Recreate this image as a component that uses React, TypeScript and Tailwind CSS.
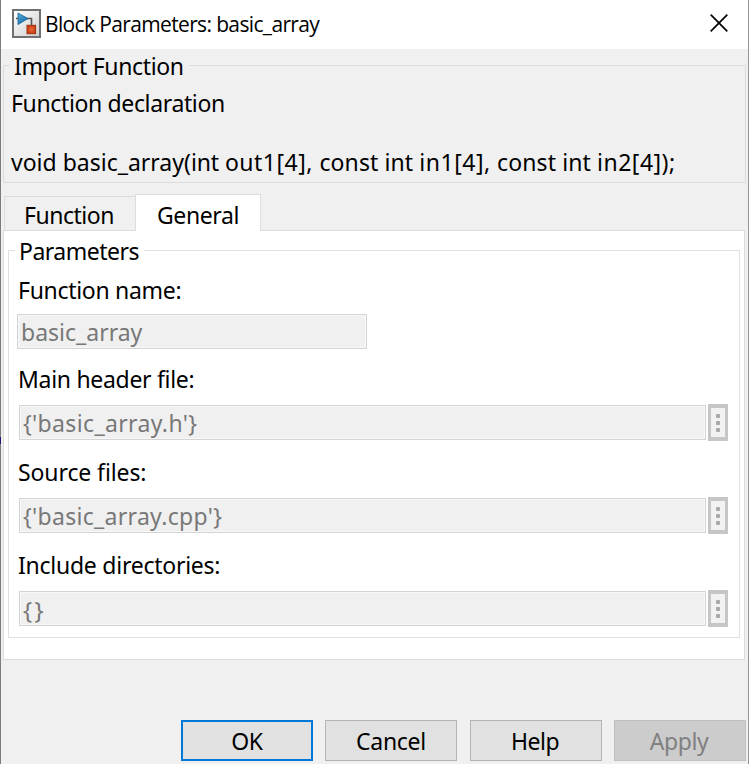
import React from 'react';

const FONT = "font-['Noto_Sans',sans-serif]";

function BlockIcon() {
  return (
    <svg width="29" height="29" viewBox="0 0 29 29" className="block shrink-0">
      <defs>
        <linearGradient id="tile" x1="0" y1="0" x2="1" y2="1">
          <stop offset="0" stopColor="#ffffff" />
          <stop offset="1" stopColor="#cfcfcf" />
        </linearGradient>
        <linearGradient id="tri" x1="0" y1="0" x2="0.6" y2="1">
          <stop offset="0" stopColor="#5cb4e0" />
          <stop offset="1" stopColor="#1467a4" />
        </linearGradient>
        <radialGradient id="sq">
          <stop offset="0" stopColor="#ee6a38" />
          <stop offset="1" stopColor="#c93c10" />
        </radialGradient>
      </defs>
      <rect x="1" y="1" width="27" height="27" fill="url(#tile)" stroke="#6e7072" strokeWidth="2" />
      <path d="M4 9.5H6M15 9.5H19.5V16" fill="none" stroke="#55585a" strokeWidth="1.6" />
      <path d="M6 4L16 9.6L6 15.6Z" fill="url(#tri)" stroke="#17659d" strokeWidth="0.8" />
      <rect x="15" y="16.3" width="8.6" height="8.4" fill="url(#sq)" stroke="#9f3213" strokeWidth="1" />
    </svg>
  );
}

function MoreButton() {
  return (
    <button className="flex h-[37px] w-5 shrink-0 flex-col items-center justify-center gap-[3px] border-x-[3px] border-y-4 border-[#c6c6c6] bg-[#f2f2f2]">
      <span className="size-1 rounded-[1px] bg-[#a9a9a9]" />
      <span className="size-1 rounded-[1px] bg-[#a9a9a9]" />
      <span className="size-1 rounded-[1px] bg-[#a9a9a9]" />
    </button>
  );
}

function FileRow({ label, value, labelClass, valueClass }: { label: string; value: string; labelClass: string; valueClass: string }) {
  return (
    <div className="h-[93px]">
      <div className="h-[42px] leading-[34px]"><span className={labelClass}>{label}</span></div>
      <div className="ml-px flex items-start gap-0.5">
        <div className="mt-px flex h-[35px] w-[687px] items-center border border-[#d4d4d4] bg-[#f0f0f0] pl-[3px] pt-0.5 text-[#787878] inset-ring inset-ring-[#f8f8f8]">
          <span className={valueClass}>{value}</span>
        </div>
        <MoreButton />
      </div>
    </div>
  );
}

export default function App() {
  return (
    <div className={`${FONT} relative h-[764px] w-[750px] overflow-hidden whitespace-pre bg-white text-[23px] text-black`}>
      <div className="flex h-full w-[749px] flex-col border-x border-l-[#7c7c7c] border-r-[#969696] bg-[#f0f0f0]">
        <header className="flex h-[49px] items-start bg-white pl-[11px]">
          <div className="pt-[9px]"><BlockIcon /></div>
          <h1 className="ml-1 flex-1 pt-[10px] font-['Open_Sans',sans-serif] text-[21px] leading-7">
            <span className="tracking-[-0.64px]">Block Parameters: basic_array</span>
          </h1>
          <svg width="18" height="18" viewBox="0 0 18 18" className="mr-[20px] mt-[14px]">
            <path d="M0.7 0.7L17.3 17.3M17.3 0.7L0.7 17.3" stroke="#000" strokeWidth="1.7" />
          </svg>
        </header>

        <section className="ml-0.5 mt-4 h-[118px] w-[743px] border border-[#dcdcdc]">
          <h2 className="-mt-[15px] ml-[6px] h-[30px] w-fit bg-[#f0f0f0] pl-1 pr-[5px] leading-[30px]"><span className="tracking-[-0.35px]">Import Function</span></h2>
          <p className="ml-[7px] mt-[7px] h-[30px] leading-[30px]"><span className="tracking-[-0.36px]">Function declaration</span></p>
          <p className="ml-[7px] mt-[29px] h-[30px] leading-[30px]">
            <span>void basic_array(</span>
            <span className="tracking-[-0.1px]">int </span>
            <span className="tracking-[0.5px]">out1[4], </span>
            <span className="tracking-[0.1px]">const int </span>
            <span className="tracking-[0.5px]">in1[4], </span>
            <span className="tracking-[0.1px]">const int </span>
            <span className="tracking-[0.5px]">in2[4]);</span>
          </p>
        </section>

        <nav className="ml-[3px] mt-[11px] flex h-[36px] items-end">
          <div className="flex h-[34px] w-[131px] items-center justify-center border border-b-0 border-r-0 border-[#dcdcdc] pr-0.5 pt-[3px]"><span className="tracking-[-0.45px]">Function</span></div>
          <div className="relative z-10 -mb-px flex h-[37px] w-[126px] items-center justify-center border border-b-0 border-[#dcdcdc] bg-white pt-1"><span className="tracking-[-0.4px]">General</span></div>
        </nav>

        <main className="ml-0.5 h-[430px] w-[742px] border border-[#dcdcdc] bg-white pl-[4px] pt-[19px]">
          <section className="h-[388px] w-[732px] border border-[#e0e0e0] pl-[9px]">
            <h2 className="-ml-[3px] -mt-[15px] h-[30px] w-fit bg-white pl-1 pr-[5px] leading-[30px]"><span className="tracking-[-0.5px]">Parameters</span></h2>
            <div className="mt-[8px] h-[32px] leading-[32px]"><span className="tracking-[-0.3px]">Function name:</span></div>
            <div className="-ml-px mt-[8px] flex h-[35px] w-[350px] items-center border border-[#d4d4d4] bg-[#f0f0f0] pl-[3px] pt-0.5 text-[#787878] inset-ring inset-ring-[#f8f8f8]">
              <span>basic_array</span>
            </div>
            <div className="mt-[13px]">
              <FileRow label="Main header file:" value="{'basic_array.h'}" labelClass="tracking-[-0.3px]" valueClass="tracking-[0.35px]" />
              <FileRow label="Source files:" value="{'basic_array.cpp'}" labelClass="tracking-[-0.1px]" valueClass="tracking-[0.3px]" />
              <FileRow label="Include directories:" value="{}" labelClass="tracking-[-0.25px]" valueClass="text-[24px] tracking-[2.5px]" />
            </div>
          </section>
        </main>

        <footer className="mt-[60px] flex gap-3 pl-[180px]">
          <button className="h-[41px] w-[132px] shrink-0 border-2 border-[#0078d7] bg-[#e1e1e1] pt-0.5"><span className="tracking-[-0.3px]">OK</span></button>
          <button className="h-[41px] w-[132px] shrink-0 border border-[#b4b4b4] bg-[#e1e1e1] pt-0.5"><span className="tracking-[-0.3px]">Cancel</span></button>
          <button className="ml-px h-[41px] w-[132px] shrink-0 border border-[#b4b4b4] bg-[#e1e1e1] pr-0.5 pt-0.5"><span className="tracking-[-0.5px]">Help</span></button>
          <button className="h-[41px] w-[132px] shrink-0 border border-[#bfbfbf] bg-[#cccccc] pr-0.5 pt-0.5 text-[#808080]"><span className="tracking-[-0.4px]">Apply</span></button>
        </footer>
      </div>
      <div className="absolute left-0 top-[437px] h-[7px] w-px bg-[#1c1477]" />
    </div>
  );
}
